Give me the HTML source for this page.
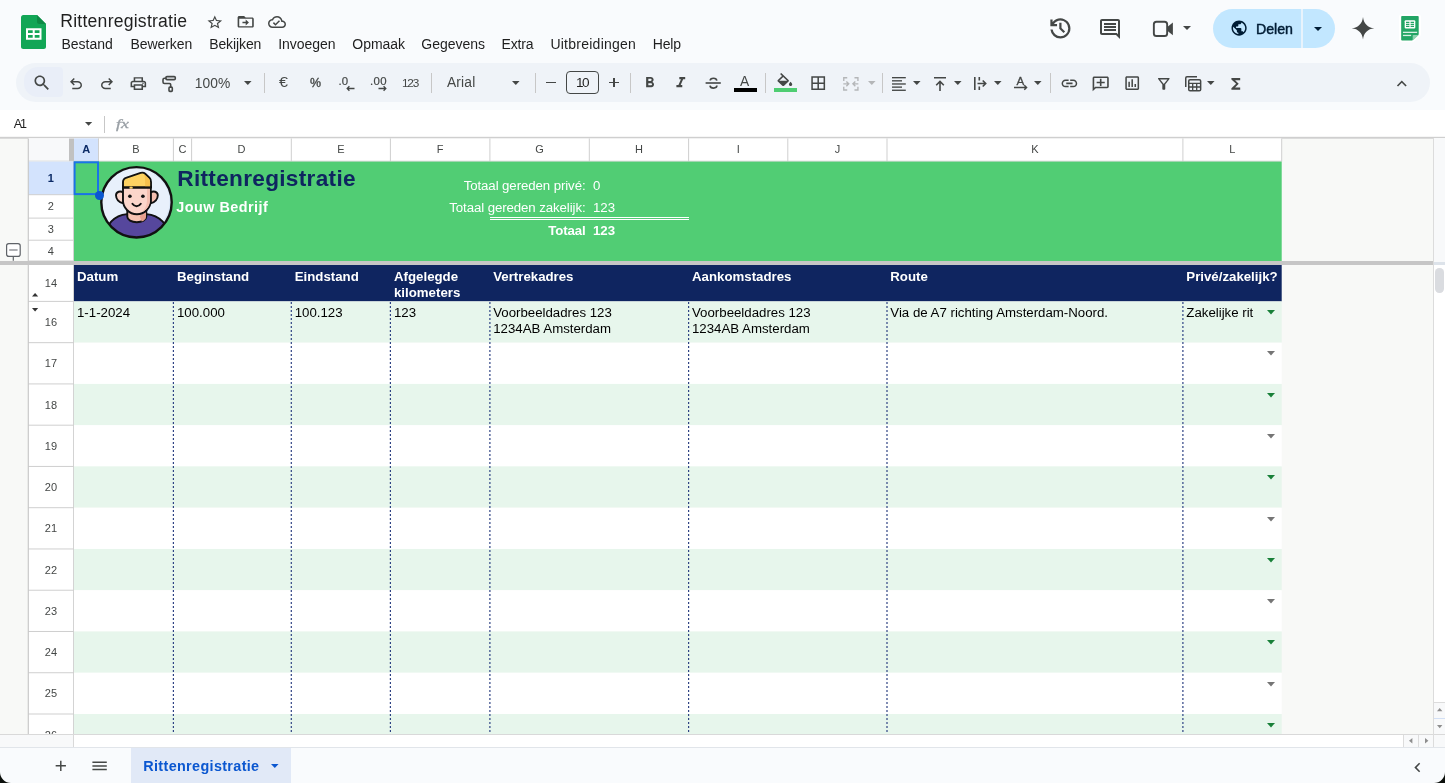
<!DOCTYPE html>
<html>
<head>
<meta charset="utf-8">
<title>Rittenregistratie</title>
<style>
*{box-sizing:border-box;margin:0;padding:0}
html,body{width:1445px;height:783px;overflow:hidden;background:#f9fbfd;font-family:"Liberation Sans",sans-serif;color:#1f1f1f}
#root{will-change:transform;position:relative;width:1445px;height:783px;overflow:hidden;background:#f9fbfd}
.abs{position:absolute}
.t{position:absolute;white-space:nowrap}
svg{position:absolute;overflow:visible}

</style>
</head>
<body>
<div id="root">
<!-- HEADER -->
<svg style="left:21px;top:14.5px" width="25" height="34" viewBox="0 0 25 34">
<path d="M2.3 0H16l9 9v22.7c0 1.3-1 2.3-2.3 2.3H2.3C1 34 0 33 0 31.700V2.300C0 1 1 0 2.300 0z" fill="#12a656"/>
<path d="M16 0l9 9h-6.700C17 9 16 8 16 6.700z" fill="#0d8a45"/>
<path d="M5 13.300h15.500v11.500H5zM7 15.300v2.700h4.700v-2.700zM13.700 15.300v2.700h4.800v-2.700zM7 20v2.800h4.700V20zM13.700 20v2.800h4.800V20z" fill="#fff" fill-rule="evenodd"/>
</svg>
<div class="t" style="left:60.30px;top:13px;font-size:17.60px;line-height:17.60px;color:#1f1f1f;letter-spacing:0.228px;">Rittenregistratie</div>
<div class="t" style="left:61.40px;top:37px;font-size:14.00px;line-height:14.00px;color:#1f1f1f;">Bestand</div>
<div class="t" style="left:130.40px;top:37px;font-size:14.00px;line-height:14.00px;color:#1f1f1f;letter-spacing:-0.065px;">Bewerken</div>
<div class="t" style="left:209.20px;top:37px;font-size:14.00px;line-height:14.00px;color:#1f1f1f;letter-spacing:-0.102px;">Bekijken</div>
<div class="t" style="left:278.20px;top:37px;font-size:14.00px;line-height:14.00px;color:#1f1f1f;letter-spacing:-0.030px;">Invoegen</div>
<div class="t" style="left:352.30px;top:37px;font-size:14.00px;line-height:14.00px;color:#1f1f1f;letter-spacing:-0.042px;">Opmaak</div>
<div class="t" style="left:421.30px;top:37px;font-size:14.00px;line-height:14.00px;color:#1f1f1f;letter-spacing:-0.017px;">Gegevens</div>
<div class="t" style="left:501.60px;top:37px;font-size:14.00px;line-height:14.00px;color:#1f1f1f;letter-spacing:-0.194px;">Extra</div>
<div class="t" style="left:550.40px;top:37px;font-size:14.00px;line-height:14.00px;color:#1f1f1f;letter-spacing:0.250px;">Uitbreidingen</div>
<div class="t" style="left:652.70px;top:37px;font-size:14.00px;line-height:14.00px;color:#1f1f1f;letter-spacing:-0.164px;">Help</div>
<svg style="left:205.53px;top:13.92px" width="17.60" height="16.60" viewBox="0 0 24 24" fill="#444746" preserveAspectRatio="none" ><path d="M22 9.24l-7.19-.62L12 2 9.19 8.63 2 9.24l5.460 4.730L5.820 21 12 17.270 18.180 21l-1.630-7.030L22 9.240zM12 15.400l-3.760 2.270 1-4.280-3.320-2.880 4.380-.380L12 6.100l1.710 4.040 4.380.380-3.320 2.880 1 4.280L12 15.400z"/></svg>
<svg style="left:235.98px;top:13.28px" width="19.40" height="17.50" viewBox="0 0 24 24" fill="#444746" preserveAspectRatio="none" ><path d="M20 6h-8l-2-2H4c-1.100 0-2 .900-2 2v12c0 1.100.900 2 2 2h16c1.100 0 2-.900 2-2V8c0-1.100-.900-2-2-2zm0 12H4V8h16v10zm-8-1l4-4-4-4v3H8v2h4v3z"/></svg>
<svg style="left:268.20px;top:13.20px" width="18.00" height="18.00" viewBox="0 0 24 24" fill="#444746" ><path d="M19.350 10.040C18.670 6.590 15.640 4 12 4 9.110 4 6.600 5.640 5.350 8.040 2.340 8.360 0 10.910 0 14c0 3.310 2.690 6 6 6h13c2.760 0 5-2.240 5-5 0-2.640-2.050-4.780-4.650-4.960zM19 18H6c-2.210 0-4-1.790-4-4 0-2.050 1.530-3.760 3.560-3.970l1.070-.110.500-.950C8.080 7.140 9.940 6 12 6c2.620 0 4.880 1.860 5.390 4.430l.300 1.500 1.530.110c1.560.100 2.780 1.410 2.780 2.960 0 1.650-1.350 3-3 3zm-9-3.820l-2.090-2.090L6.500 13.500 10 17l6.010-6.010-1.410-1.410z"/></svg>
<svg style="left:1047.35px;top:14.75px" width="26.80" height="26.80" viewBox="0 -960 960 960" fill="#444746" ><path d="M480-120q-138 0-240.500-91.500T122-440h82q14 104 92.500 172T480-200q117 0 198.500-81.500T760-480q0-117-81.500-198.500T480-760q-69 0-129 32t-101 88h110v80H120v-240h80v94q51-64 124.500-99T480-840q75 0 140.500 28.500t114 77q48.500 48.500 77 114T840-480q0 75-28.500 140.500t-77 114q-48.500 48.500-114 77T480-120Zm112-192L440-464v-216h80v184l128 128-56 56Z"/></svg>
<svg style="left:1097.50px;top:16.80px" width="24.00" height="24.00" viewBox="0 0 24 24" fill="#444746" ><path d="M21.990 4c0-1.100-.890-2-1.990-2H4c-1.100 0-2 .900-2 2v12c0 1.100.900 2 2 2h14l4 4-.010-18zM20 4v13.170L18.830 16H4V4h16zM6 12h12v2H6zm0-3h12v2H6zm0-3h12v2H6z"/></svg>
<svg style="left:1150px;top:18px" width="26" height="22" viewBox="0 0 26 22"><rect x="3.850" y="3.700" width="13.300" height="14.300" rx="2.600" fill="none" stroke="#444746" stroke-width="1.900"/><path d="M17.300 8.900l5.600-4.500v12.900l-5.600-4.500z" fill="#444746"/></svg>
<svg style="left:1182.50px;top:26.30px" width="8.00" height="4.00" viewBox="0 0 8.00 4.00" fill="#444746"><polygon points="0,0 8.00,0 4.00,4.00"/></svg>
<div class="abs" style="left:1213.00px;top:8.50px;width:122.00px;height:39.50px;background:#c2e7ff;border-radius:20px;"></div>
<div class="abs" style="left:1301.00px;top:8.50px;width:1.50px;height:39.50px;background:#e8f3fc;"></div>
<svg style="left:1230.10px;top:19.20px" width="18.20" height="18.20" viewBox="0 0 24 24" fill="#001d35" ><path d="M12 2C6.480 2 2 6.480 2 12s4.480 10 10 10 10-4.480 10-10S17.520 2 12 2zm-1 17.930c-3.950-.490-7-3.850-7-7.930 0-.620.080-1.210.210-1.790L9 15v1c0 1.100.900 2 2 2v1.930zm6.900-2.540c-.260-.810-1-1.390-1.900-1.390h-1v-3c0-.550-.450-1-1-1H8v-2h2c.550 0 1-.450 1-1V7h2c1.100 0 2-.900 2-2v-.410c2.930 1.190 5 4.060 5 7.410 0 2.080-.800 3.970-2.100 5.390z"/></svg>
<div class="t" style="left:1256.00px;top:22px;font-size:14.20px;line-height:14.20px;color:#001d35;letter-spacing:-0.025px;-webkit-text-stroke:0.45px #001d35;">Delen</div>
<svg style="left:1314.00px;top:26.80px" width="8.00" height="4.00" viewBox="0 0 8.00 4.00" fill="#001d35"><polygon points="0,0 8.00,0 4.00,4.00"/></svg>
<svg style="left:1350.5px;top:17.100px" width="24" height="22.600" viewBox="0 0 24 24" fill="#444746"><path d="M12 0C12.700 7 17 11.300 24 12 17 12.700 12.700 17 12 24 11.300 17 7 12.700 0 12 7 11.300 11.300 7 12 0z"/></svg>
<svg style="left:1398.6px;top:14.700px" width="21.900" height="27.300" viewBox="0 0 20 27.300" preserveAspectRatio="none">
<path d="M2.800 0h14.400a1.800 1.800 0 0 1 1.800 1.800v18l-6.500 6.500H2.800A1.800 1.800 0 0 1 1 24.500V1.800A1.800 1.800 0 0 1 2.800 0z" fill="#fff" stroke="#fff" stroke-width="2"/>
<path d="M2.800 1h14.400a.8.800 0 0 1 .8.800v17.700l-6 6H2.800a.8.800 0 0 1-.8-.8V1.800a.8.800 0 0 1 .8-.8z" fill="#22a565"/>
<path d="M12.500 25.500l5.500-5.500h-4.700a.8.800 0 0 0-.8.800z" fill="#8fd3b0"/>
<rect x="5.200" y="5.200" width="9.700" height="8.300" rx="1" fill="#fff"/>
<path d="M6.400 6.800h3.100v1.100H6.400zM10.600 6.800h3.100v1.100h-3.100zM6.400 8.800h3.100v1.100H6.400zM10.600 8.800h3.100v1.100h-3.100zM6.400 10.800h3.100v1.100H6.400zM10.600 10.800h3.100v1.100h-3.100z" fill="#22a565"/>
<rect x="3.600" y="16.700" width="13" height="1.300" fill="#d8f0e3"/>
<rect x="3.600" y="19.800" width="7.500" height="1.300" fill="#d8f0e3"/>
</svg>
<!-- TOOLBAR -->
<div class="abs" style="left:16.00px;top:63.00px;width:1413.50px;height:38.70px;background:#eff3f8;border-radius:19.500px;"></div>
<div class="abs" style="left:24.00px;top:66.70px;width:39.00px;height:30.70px;background:#e9eef8;border-radius:14px 4px 4px 14px;"></div>
<svg style="left:32.40px;top:72.90px" width="19.80" height="19.80" viewBox="0 0 24 24" fill="#444746" ><path d="M15.500 14h-.790l-.280-.270C15.410 12.590 16 11.110 16 9.500 16 5.910 13.090 3 9.500 3S3 5.910 3 9.500 5.910 16 9.500 16c1.610 0 3.090-.590 4.230-1.570l.270.280v.790l5 4.990L20.490 19l-4.990-5zm-6 0C7.010 14 5 11.990 5 9.500S7.010 5 9.500 5 14 7.010 14 9.500 11.990 14 9.500 14z"/></svg>
<svg style="left:67.00px;top:75.30px" width="18.00" height="18.00" viewBox="0 -960 960 960" fill="#444746" ><path d="M280-200v-80h284q63 0 109.500-40T720-420q0-60-46.500-100T564-560H312l104 104-56 56-200-200 200-200 56 56-104 104h252q97 0 166.500 63T800-420q0 94-69.500 157T564-200H280Z"/></svg>
<svg style="left:98.00px;top:75.30px" width="18.00" height="18.00" viewBox="0 -960 960 960" fill="#444746" ><path d="M396-200q-97 0-166.500-63T160-420q0-94 69.500-157T396-640h252L544-744l56-56 200 200-200 200-56-56 104-104H396q-63 0-109.500 40T240-420q0 60 46.500 100T396-280h284v80H396Z"/></svg>
<svg style="left:129.24px;top:74.95px" width="18.70" height="17.20" viewBox="0 0 24 24" fill="#444746" preserveAspectRatio="none" ><path d="M19 8h-1V3H6v5H5c-1.660 0-3 1.340-3 3v6h4v4h12v-4h4v-6c0-1.660-1.340-3-3-3zM8 5h8v3H8V5zm8 14H8v-4h8v4zm2-4v-2H6v2H4v-4c0-.550.450-1 1-1h14c.550 0 1 .450 1 1v4h-2z"/><circle cx="18" cy="11.500" r="1"/></svg>
<svg style="left:160px;top:74px" width="20" height="20" viewBox="0 0 20 20" fill="none" stroke="#444746" stroke-width="1.600" stroke-linejoin="round" stroke-linecap="round"><rect x="5.900" y="2.600" width="9.400" height="3" rx="1.100"/><path d="M5.900 4.200H4.500Q3 4.200 3 5.700V8Q3 9.500 4.500 9.500H9.500Q10.700 9.500 10.700 10.700V12.800"/><rect x="9" y="13.100" width="3.300" height="4.300" rx=".9"/></svg>
<div class="t" style="left:194.80px;top:77px;font-size:13.80px;line-height:13.80px;color:#444746;letter-spacing:0.035px;">100%</div>
<svg style="left:243.90px;top:81.25px" width="7.60" height="3.90" viewBox="0 0 7.60 3.90" fill="#444746"><polygon points="0,0 7.60,0 3.80,3.90"/></svg>
<div class="abs" style="left:264.40px;top:73.00px;width:1.00px;height:19.50px;background:#c7c7c7;"></div>
<div class="t" style="left:279.30px;top:75px;font-size:14.20px;line-height:14.20px;color:#444746;transform:scaleX(1.14);transform-origin:0 0;">€</div>
<div class="t" style="left:310.00px;top:77px;font-size:12.40px;line-height:12.40px;color:#444746;-webkit-text-stroke:0.35px #444746;">%</div>
<div class="t" style="left:338.60px;top:76px;font-size:11.40px;line-height:11.40px;color:#444746;letter-spacing:0.093px;-webkit-text-stroke:0.20px #444746;">.0</div>
<svg style="left:346.400px;top:84.800px" width="9" height="7" viewBox="0 0 9 7" fill="none" stroke="#444746" stroke-width="1.300"><path d="M8.500 3.500H1.200M3.400 1.300L1.200 3.500l2.200 2.200"/></svg>
<div class="t" style="left:370.10px;top:76px;font-size:11.40px;line-height:11.40px;color:#444746;letter-spacing:0.326px;-webkit-text-stroke:0.20px #444746;">.00</div>
<svg style="left:377.600px;top:84.800px" width="9" height="7" viewBox="0 0 9 7" fill="none" stroke="#444746" stroke-width="1.300"><path d="M0.500 3.500H7.800M5.600 1.300L7.800 3.500 5.600 5.700"/></svg>
<div class="t" style="left:402.00px;top:78px;font-size:11.80px;line-height:11.80px;color:#444746;letter-spacing:-1.194px;">123</div>
<div class="abs" style="left:430.50px;top:73.00px;width:1.00px;height:19.50px;background:#c7c7c7;"></div>
<div class="t" style="left:447.00px;top:76px;font-size:13.80px;line-height:13.80px;color:#444746;letter-spacing:0.148px;">Arial</div>
<svg style="left:512.20px;top:80.75px" width="7.60" height="3.90" viewBox="0 0 7.60 3.90" fill="#444746"><polygon points="0,0 7.60,0 3.80,3.90"/></svg>
<div class="abs" style="left:534.90px;top:73.00px;width:1.00px;height:19.50px;background:#c7c7c7;"></div>
<div class="abs" style="left:545.80px;top:81.80px;width:10.60px;height:1.50px;background:#444746;"></div>
<div class="abs" style="left:566.20px;top:71.20px;width:33.20px;height:23.00px;background:transparent;border:1px solid #444746;border-radius:4px;"></div>
<div class="t" style="left:576.00px;top:76px;font-size:13.60px;line-height:13.60px;color:#1f1f1f;letter-spacing:-1.627px;">10</div>
<div class="abs" style="left:609.30px;top:81.80px;width:9.60px;height:1.50px;background:#444746;"></div>
<div class="abs" style="left:613.35px;top:77.70px;width:1.50px;height:9.60px;background:#444746;"></div>
<div class="abs" style="left:630.10px;top:73.00px;width:1.00px;height:19.50px;background:#c7c7c7;"></div>
<svg style="left:640.50px;top:73.90px" width="17.60" height="17.60" viewBox="0 0 24 24" fill="#444746" ><path d="M15.600 10.790c.970-.670 1.650-1.770 1.650-2.790 0-2.260-1.750-4-4-4H7v14h7.040c2.090 0 3.710-1.700 3.710-3.790 0-1.520-.860-2.820-2.150-3.420zM10 6.500h3c.830 0 1.500.670 1.500 1.500s-.670 1.500-1.500 1.500h-3v-3zm3.500 9H10v-3h3.500c.830 0 1.500.670 1.500 1.500s-.670 1.500-1.500 1.500z"/></svg>
<svg style="left:672.00px;top:73.90px" width="17.60" height="17.60" viewBox="0 0 24 24" fill="#444746" ><path d="M10 4v3h2.210l-3.420 8H6v3h8v-3h-2.210l3.420-8H18V4z"/></svg>
<svg style="left:704.500px;top:74px" width="17" height="18" viewBox="0 0 17 18" fill="none" stroke="#444746" stroke-width="1.600"><path d="M0.600 9H15.800"/><path d="M11.800 6.600C11.600 5 10.300 4.200 8.500 4.200 6.500 4.200 5.200 5.200 5.200 6.600"/><path d="M5 11.600c.2 1.600 1.500 2.500 3.500 2.500s3.400-.9 3.400-2.500"/></svg>
<div class="t" style="left:740.10px;top:75px;font-size:13.80px;line-height:13.80px;color:#444746;">A</div>
<div class="abs" style="left:733.50px;top:88.30px;width:23.20px;height:4.00px;background:#000;"></div>
<div class="abs" style="left:764.80px;top:73.00px;width:1.00px;height:19.50px;background:#c7c7c7;"></div>
<svg style="left:774.74px;top:72.60px" width="19.70" height="18.50" viewBox="0 0 24 24" fill="#444746" preserveAspectRatio="none" ><path d="M16.560 8.940L7.620 0 6.210 1.410l2.380 2.380-5.150 5.150c-.590.590-.590 1.540 0 2.120l5.500 5.500c.290.290.680.440 1.060.440s.770-.150 1.060-.440l5.500-5.500c.590-.580.590-1.530 0-2.120zM5.210 10L10 5.210 14.790 10H5.210zM19 11.500s-2 2.170-2 3.500c0 1.100.900 2 2 2s2-.900 2-2c0-1.330-2-3.500-2-3.500z"/></svg>
<div class="abs" style="left:774.00px;top:88.30px;width:23.20px;height:4.00px;background:#4fcd72;"></div>
<svg style="left:809.10px;top:74.20px" width="18.40" height="18.40" viewBox="0 0 24 24" fill="#444746" ><path d="M3 3v18h18V3H3zm8 16H5v-6h6v6zm0-8H5V5h6v6zm8 8h-6v-6h6v6zm0-8h-6V5h6v6z"/></svg>
<svg style="left:843.200px;top:76.600px" width="15.700" height="13.700" viewBox="0 0 16 14" fill="none" stroke="#b4b6b8" stroke-width="1.400"><path d="M0.750 4V0.750H4.300M11.700 0.750h3.550V4M0.750 10v3.250H4.300M11.700 13.250h3.550V10M0.300 7h5.500M3.400 4.500L5.900 7 3.400 9.500M15.700 7H10.200M12.600 4.500L10.100 7l2.500 2.500"/></svg>
<svg style="left:868.00px;top:81.25px" width="7.60" height="3.90" viewBox="0 0 7.60 3.90" fill="#b4b6b8"><polygon points="0,0 7.60,0 3.80,3.90"/></svg>
<div class="abs" style="left:882.00px;top:73.00px;width:1.00px;height:19.50px;background:#c7c7c7;"></div>
<svg style="left:892.400px;top:76.700px" width="13.800" height="14" viewBox="0 0 13.800 14" fill="#444746"><rect x="0" y="0" width="13.800" height="1.350"/><rect x="0" y="3.150" width="10" height="1.350"/><rect x="0" y="6.300" width="13.800" height="1.350"/><rect x="0" y="9.450" width="10" height="1.350"/><rect x="0" y="12.600" width="13.800" height="1.350"/></svg>
<svg style="left:913.20px;top:81.25px" width="7.60" height="3.90" viewBox="0 0 7.60 3.90" fill="#444746"><polygon points="0,0 7.60,0 3.80,3.90"/></svg>
<svg style="left:933.700px;top:76.600px" width="12" height="14" viewBox="0 0 12 14" fill="none" stroke="#444746" stroke-width="1.600"><path d="M0 0.800h12M6 14V4.500M2.200 8.300l3.800-3.800 3.800 3.800"/></svg>
<svg style="left:953.70px;top:81.25px" width="7.60" height="3.90" viewBox="0 0 7.60 3.90" fill="#444746"><polygon points="0,0 7.60,0 3.80,3.90"/></svg>
<svg style="left:973.800px;top:77px" width="13" height="13" viewBox="0 0 13 13" fill="none" stroke="#444746" stroke-width="1.600"><path d="M0.800 0v13M5.300 0v3.500M5.300 9.500V13M3.500 6.500h8M8.700 3.500l3 3-3 3"/></svg>
<svg style="left:994.00px;top:81.25px" width="7.60" height="3.90" viewBox="0 0 7.60 3.90" fill="#444746"><polygon points="0,0 7.60,0 3.80,3.90"/></svg>
<div class="t" style="left:1016.40px;top:75px;font-size:11.60px;line-height:11.60px;color:#444746;-webkit-text-stroke:0.30px #444746;">A</div>
<svg style="left:1014px;top:85.200px" width="14" height="5" viewBox="0 0 14 5" fill="none" stroke="#444746" stroke-width="1.400"><path d="M0 2.500h12.500M10.300 0.200l2.300 2.300-2.300 2.300"/></svg>
<svg style="left:1034.10px;top:81.25px" width="7.60" height="3.90" viewBox="0 0 7.60 3.90" fill="#444746"><polygon points="0,0 7.60,0 3.80,3.90"/></svg>
<div class="abs" style="left:1050.00px;top:73.00px;width:1.00px;height:19.50px;background:#c7c7c7;"></div>
<svg style="left:1060.10px;top:74.00px" width="18.80" height="18.80" viewBox="0 0 24 24" fill="#444746" ><path d="M3.900 12c0-1.710 1.390-3.100 3.100-3.100h4V7H7c-2.760 0-5 2.240-5 5s2.240 5 5 5h4v-1.900H7c-1.710 0-3.100-1.390-3.100-3.100zM8 13h8v-2H8v2zm9-6h-4v1.900h4c1.710 0 3.100 1.390 3.100 3.100s-1.390 3.100-3.100 3.100h-4V17h4c2.760 0 5-2.240 5-5s-2.240-5-5-5z"/></svg>
<svg style="left:1091.200px;top:74.700px" width="19.400" height="17.800" viewBox="0 0 24 24" preserveAspectRatio="none" fill="#444746"><g transform="translate(24,0) scale(-1,1)"><path d="M22 4c0-1.100-.900-2-2-2H4c-1.100 0-2 .900-2 2v12c0 1.100.900 2 2 2h14l4 4V4zm-2 13.170L18.830 16H4V4h16v13.170zM13 5h-2v4H7v2h4v4h2v-4h4V9h-4z"/></g></svg>
<svg style="left:1123.20px;top:74.20px" width="18.40" height="18.40" viewBox="0 0 24 24" fill="#444746" ><path d="M9 17H7v-7h2v7zm4 0h-2V7h2v10zm4 0h-2v-4h2v4zm2 2H5V5h14v14zm0-16H5c-1.100 0-2 .900-2 2v14c0 1.100.900 2 2 2h14c1.100 0 2-.900 2-2V5c0-1.100-.900-2-2-2z"/></svg>
<svg style="left:1155.00px;top:75.10px" width="17.60" height="17.60" viewBox="0 0 24 24" fill="#444746" ><path d="M7 6h10l-5.010 6.300L7 6zm-2.750-.390C6.270 8.200 10 13 10 13v6c0 .550.450 1 1 1h2c.550 0 1-.450 1-1v-6s3.720-4.800 5.740-7.390c.510-.660.040-1.610-.790-1.610H5.040c-.830 0-1.300.950-.790 1.610z"/></svg>
<svg style="left:1184.800px;top:75.600px" width="16.400" height="15.600" viewBox="0 0 16.400 15.600" fill="none" stroke="#444746" stroke-width="1.500"><path d="M0.750 11V2A1.300 1.300 0 0 1 2 0.750H12"/><rect x="3.750" y="3.750" width="11.900" height="11.100" rx="1.300"/><path d="M3.750 7.300h11.900M3.750 11h11.900M7.700 7.300v7.500M11.700 7.300v7.500" stroke-width="1.300"/></svg>
<svg style="left:1207.30px;top:81.25px" width="7.60" height="3.90" viewBox="0 0 7.60 3.90" fill="#444746"><polygon points="0,0 7.60,0 3.80,3.90"/></svg>
<svg style="left:1227.30px;top:74.60px" width="17.60" height="17.60" viewBox="0 0 24 24" fill="#444746" ><path d="M18 4H6v2l6.500 6L6 18v2h12v-3h-7l5-5-5-5h7z"/></svg>
<svg style="left:1392.20px;top:74.10px" width="19.60" height="19.60" viewBox="0 0 24 24" fill="#444746" ><path d="M12 8l-6 6 1.410 1.410L12 10.830l4.590 4.580L18 14z"/></svg>
<!-- FORMULA -->
<div class="abs" style="left:0.00px;top:110.00px;width:1445.00px;height:27.60px;background:#fff;"></div>
<div class="t" style="left:13.80px;top:118px;font-size:12.60px;line-height:12.60px;color:#1f1f1f;letter-spacing:-2.212px;">A1</div>
<svg style="left:84.70px;top:121.75px" width="7.20" height="3.70" viewBox="0 0 7.20 3.70" fill="#444746"><polygon points="0,0 7.20,0 3.60,3.70"/></svg>
<div class="abs" style="left:104.00px;top:116.00px;width:1.00px;height:16.50px;background:#c7c7c7;"></div>
<div class="t" style="left:116px;top:116px;font-family:'Liberation Serif',serif;font-style:italic;font-size:13.200px;line-height:16px;color:#9aa0a6;-webkit-text-stroke:0.3px #9aa0a6;transform:scaleX(1.36);transform-origin:0 0">fx</div>
<!-- GRID -->
<svg style="left:0;top:0" width="1445" height="783" viewBox="0 0 1445 783"><rect x="0.00" y="137.20" width="1445.00" height="610.00" fill="#f8f9f7" /><rect x="0.00" y="136.80" width="1445.00" height="1.90" fill="#cfcfcf" /><rect x="28.00" y="138.40" width="1253.70" height="23.00" fill="#fff" /><rect x="28.00" y="138.40" width="41.00" height="22.60" fill="#f8f9fa" /><rect x="69.00" y="138.60" width="5.00" height="23.00" fill="#c1c1c1" /><rect x="74.00" y="138.40" width="24.50" height="22.60" fill="#d3e3fd" /><rect x="98.00" y="138.40" width="1.00" height="23.00" fill="#cfcfcf" /><rect x="172.90" y="138.40" width="1.00" height="23.00" fill="#cfcfcf" /><rect x="191.10" y="138.40" width="1.00" height="23.00" fill="#cfcfcf" /><rect x="290.80" y="138.40" width="1.00" height="23.00" fill="#cfcfcf" /><rect x="389.90" y="138.40" width="1.00" height="23.00" fill="#cfcfcf" /><rect x="489.40" y="138.40" width="1.00" height="23.00" fill="#cfcfcf" /><rect x="588.80" y="138.40" width="1.00" height="23.00" fill="#cfcfcf" /><rect x="688.10" y="138.40" width="1.00" height="23.00" fill="#cfcfcf" /><rect x="787.30" y="138.40" width="1.00" height="23.00" fill="#cfcfcf" /><rect x="886.50" y="138.40" width="1.00" height="23.00" fill="#cfcfcf" /><rect x="1182.40" y="138.40" width="1.00" height="23.00" fill="#cfcfcf" /><rect x="1281.20" y="138.40" width="1.00" height="23.00" fill="#cfcfcf" /><rect x="28.00" y="160.70" width="1253.70" height="1.00" fill="#cfcfcf" /><rect x="28.00" y="161.60" width="45.60" height="572.80" fill="#fff" /><rect x="28.00" y="161.60" width="45.60" height="33.10" fill="#d3e3fd" /><rect x="28.00" y="194.20" width="46.00" height="1.00" fill="#cfcfcf" /><rect x="28.00" y="217.60" width="46.00" height="1.00" fill="#cfcfcf" /><rect x="28.00" y="239.70" width="46.00" height="1.00" fill="#cfcfcf" /><rect x="28.00" y="260.50" width="46.00" height="1.00" fill="#cfcfcf" /><rect x="28.00" y="300.90" width="46.00" height="1.00" fill="#cfcfcf" /><rect x="28.00" y="342.16" width="46.00" height="1.00" fill="#cfcfcf" /><rect x="28.00" y="383.42" width="46.00" height="1.00" fill="#cfcfcf" /><rect x="28.00" y="424.68" width="46.00" height="1.00" fill="#cfcfcf" /><rect x="28.00" y="465.94" width="46.00" height="1.00" fill="#cfcfcf" /><rect x="28.00" y="507.20" width="46.00" height="1.00" fill="#cfcfcf" /><rect x="28.00" y="548.46" width="46.00" height="1.00" fill="#cfcfcf" /><rect x="28.00" y="589.72" width="46.00" height="1.00" fill="#cfcfcf" /><rect x="28.00" y="630.98" width="46.00" height="1.00" fill="#cfcfcf" /><rect x="28.00" y="672.24" width="46.00" height="1.00" fill="#cfcfcf" /><rect x="28.00" y="713.50" width="46.00" height="1.00" fill="#cfcfcf" /><rect x="27.70" y="138.40" width="1.20" height="596.00" fill="#c9c9c9" /><rect x="73.10" y="161.60" width="0.90" height="572.80" fill="#cfcfcf" /><rect x="74.00" y="161.60" width="1207.70" height="99.60" fill="#51cd74" /><rect x="74.00" y="265.00" width="1207.70" height="36.40" fill="#0f2560" /><rect x="74.00" y="301.40" width="1207.70" height="41.31" fill="#e7f6ec" /><rect x="74.00" y="342.66" width="1207.70" height="41.31" fill="#fff" /><rect x="74.00" y="383.92" width="1207.70" height="41.31" fill="#e7f6ec" /><rect x="74.00" y="425.18" width="1207.70" height="41.31" fill="#fff" /><rect x="74.00" y="466.44" width="1207.70" height="41.31" fill="#e7f6ec" /><rect x="74.00" y="507.70" width="1207.70" height="41.31" fill="#fff" /><rect x="74.00" y="548.96" width="1207.70" height="41.31" fill="#e7f6ec" /><rect x="74.00" y="590.22" width="1207.70" height="41.31" fill="#fff" /><rect x="74.00" y="631.48" width="1207.70" height="41.31" fill="#e7f6ec" /><rect x="74.00" y="672.74" width="1207.70" height="41.31" fill="#fff" /><rect x="74.00" y="714.00" width="1207.70" height="20.45" fill="#e7f6ec" /><rect x="0.00" y="261.00" width="1433.60" height="4.00" fill="#c6c6c6" /><rect x="1433.60" y="261.00" width="11.40" height="4.00" fill="#dde3ea" /><line x1="173.40" y1="302.00" x2="173.40" y2="734.40" stroke="#2f4384" stroke-width="1.2" stroke-dasharray="2 2"/><line x1="291.30" y1="302.00" x2="291.30" y2="734.40" stroke="#2f4384" stroke-width="1.2" stroke-dasharray="2 2"/><line x1="390.40" y1="302.00" x2="390.40" y2="734.40" stroke="#2f4384" stroke-width="1.2" stroke-dasharray="2 2"/><line x1="489.90" y1="302.00" x2="489.90" y2="734.40" stroke="#2f4384" stroke-width="1.2" stroke-dasharray="2 2"/><line x1="688.60" y1="302.00" x2="688.60" y2="734.40" stroke="#2f4384" stroke-width="1.2" stroke-dasharray="2 2"/><line x1="887.00" y1="302.00" x2="887.00" y2="734.40" stroke="#2f4384" stroke-width="1.2" stroke-dasharray="2 2"/><line x1="1182.90" y1="302.00" x2="1182.90" y2="734.40" stroke="#2f4384" stroke-width="1.2" stroke-dasharray="2 2"/></svg>
<div class="t" style="left:82.28px;top:144px;font-size:11.00px;line-height:11.00px;color:#0b2a66;font-weight:bold;">A</div>
<div class="t" style="left:132.28px;top:144px;font-size:11.00px;line-height:11.00px;color:#444746;">B</div>
<div class="t" style="left:178.53px;top:144px;font-size:11.00px;line-height:11.00px;color:#444746;">C</div>
<div class="t" style="left:237.48px;top:144px;font-size:11.00px;line-height:11.00px;color:#444746;">D</div>
<div class="t" style="left:337.18px;top:144px;font-size:11.00px;line-height:11.00px;color:#444746;">E</div>
<div class="t" style="left:436.79px;top:144px;font-size:11.00px;line-height:11.00px;color:#444746;">F</div>
<div class="t" style="left:535.32px;top:144px;font-size:11.00px;line-height:11.00px;color:#444746;">G</div>
<div class="t" style="left:634.98px;top:144px;font-size:11.00px;line-height:11.00px;color:#444746;">H</div>
<div class="t" style="left:736.67px;top:144px;font-size:11.00px;line-height:11.00px;color:#444746;">I</div>
<div class="t" style="left:834.65px;top:144px;font-size:11.00px;line-height:11.00px;color:#444746;">J</div>
<div class="t" style="left:1031.28px;top:144px;font-size:11.00px;line-height:11.00px;color:#444746;">K</div>
<div class="t" style="left:1229.24px;top:144px;font-size:11.00px;line-height:11.00px;color:#444746;">L</div>
<div class="t" style="left:47.84px;top:173px;font-size:11.00px;line-height:11.00px;color:#0b2a66;font-weight:bold;">1</div>
<div class="t" style="left:47.84px;top:201px;font-size:11.00px;line-height:11.00px;color:#444746;">2</div>
<div class="t" style="left:47.84px;top:224px;font-size:11.00px;line-height:11.00px;color:#444746;">3</div>
<div class="t" style="left:47.84px;top:246px;font-size:11.00px;line-height:11.00px;color:#444746;">4</div>
<div class="t" style="left:44.78px;top:278px;font-size:11.00px;line-height:11.00px;color:#444746;">14</div>
<div class="t" style="left:44.78px;top:317px;font-size:11.00px;line-height:11.00px;color:#444746;">16</div>
<div class="t" style="left:44.78px;top:358px;font-size:11.00px;line-height:11.00px;color:#444746;">17</div>
<div class="t" style="left:44.78px;top:400px;font-size:11.00px;line-height:11.00px;color:#444746;">18</div>
<div class="t" style="left:44.78px;top:441px;font-size:11.00px;line-height:11.00px;color:#444746;">19</div>
<div class="t" style="left:44.78px;top:482px;font-size:11.00px;line-height:11.00px;color:#444746;">20</div>
<div class="t" style="left:44.78px;top:523px;font-size:11.00px;line-height:11.00px;color:#444746;">21</div>
<div class="t" style="left:44.78px;top:565px;font-size:11.00px;line-height:11.00px;color:#444746;">22</div>
<div class="t" style="left:44.78px;top:606px;font-size:11.00px;line-height:11.00px;color:#444746;">23</div>
<div class="t" style="left:44.78px;top:647px;font-size:11.00px;line-height:11.00px;color:#444746;">24</div>
<div class="t" style="left:44.78px;top:688px;font-size:11.00px;line-height:11.00px;color:#444746;">25</div>
<div class="t" style="left:44.78px;top:730px;font-size:11.00px;line-height:11.00px;color:#444746;">26</div>
<svg style="left:6.400px;top:243.300px" width="15" height="18" viewBox="0 0 15 18" fill="none" stroke="#5f6368" stroke-width="1.200"><rect x="0.600" y="0.600" width="13.600" height="12.800" rx="2.200" fill="#fff"/><path d="M3.200 7h8.400M7.300 13.400v4.400"/></svg>
<svg style="left:32.40px;top:293.10px" width="6.20" height="3.60" viewBox="0 0 6.20 3.60" fill="#333"><polygon points="0.00,3.60 3.10,0.00 6.20,3.60"/></svg>
<svg style="left:32.40px;top:307.80px" width="6.20" height="3.60" viewBox="0 0 6.20 3.60" fill="#333"><polygon points="0,0 6.20,0 3.10,3.60"/></svg>
<svg style="left:0;top:0" width="200" height="200" viewBox="0 0 200 200"><rect x="74.600" y="162.300" width="23.400" height="31.800" fill="none" stroke="#1a73e8" stroke-width="2"/></svg>
<svg style="left:99px;top:165px" width="75" height="75" viewBox="0 0 75 75">
<defs><clipPath id="cc"><circle cx="37.500" cy="37.300" r="35.300"/></clipPath></defs>
<circle cx="37.500" cy="37.300" r="35.300" fill="#e8f0fb"/>
<g clip-path="url(#cc)">
<path d="M58 6a36 36 0 0 1 6 56l-3.500-2.500a31 31 0 0 0-6-50z" fill="#d9e6f7"/>
<path d="M5 75C7 58 15 50.500 28 49.100L37.800 52l9.700-2.900C61 50.500 69 58 71 75z" fill="#56479d" stroke="#111" stroke-width="1.900" stroke-linejoin="round"/>
<path d="M12 64.500c14 8.500 37 8.500 51 0l4 11H8z" fill="#493b8a"/>
<path d="M28.300 43v8.800c0 3 4.200 5.500 9.500 5.500s9.500-2.500 9.500-5.500V43z" fill="#f7c3b2" stroke="#111" stroke-width="1.900" stroke-linejoin="round"/>
<path d="M40.500 50.800c3-.8 5-2 6.500-4v5.200c0 1.900-1.600 3.600-4.200 4.500z" fill="#e9a08e"/>
<path d="M24.200 27.600c-2.600-2.200-7.200-1-7.200 2.700 0 3.600 2.700 7.200 7.200 8z" fill="#fbd5ca" stroke="#111" stroke-width="1.900" stroke-linejoin="round"/>
<path d="M51.600 27.600c2.600-2.200 7.200-1 7.200 2.700 0 3.600-2.700 7.200-7.200 8z" fill="#f5bfb0" stroke="#111" stroke-width="1.900" stroke-linejoin="round"/>
<path d="M24 21v14.500C24 42.500 30 49.200 37.900 49.200S51.800 42.500 51.800 35.500V21z" fill="#fbd5ca" stroke="#111" stroke-width="1.900" stroke-linejoin="round"/>
<path d="M48 22.500v13c0 5-2 9.300-5.500 11.800 5.200-2 8.400-6.800 8.400-11.800v-13z" fill="#f5bfb0"/>
<path d="M24 22.500V17c0-2.500 1.500-3.700 3.700-4.400L41.600 7.900c1.800-.6 3.300-.4 4.600.8l4.200 4.100c1.200 1.200 1.600 2.400 1.600 4.100v5.600z" fill="#fdd262" stroke="#111" stroke-width="1.900" stroke-linejoin="round"/>
<path d="M45 9.200l4.700 4.300c1 1 1.400 2 1.400 3.500v4.500h-5v-5.500c0-2.400-.3-4.600-1.100-6.800z" fill="#f6c04c"/>
<path d="M24 22.500h6.300M33.800 22.500h18.200" stroke="#111" stroke-width="1.900" stroke-linecap="round"/>
<path d="M30.500 22.700h3.200" stroke="#fdd262" stroke-width="1.500"/>
<circle cx="30.900" cy="31.200" r="1.800" fill="#111"/><circle cx="43.900" cy="31.200" r="1.800" fill="#111"/>
<path d="M33.400 38.800c2.200 3.300 6.200 3.300 8.400 0" fill="none" stroke="#111" stroke-width="1.900" stroke-linecap="round"/>
</g>
<circle cx="37.500" cy="37.300" r="35.200" fill="none" stroke="#111" stroke-width="2.400"/>
</svg>
<div class="abs" style="left:94.600px;top:190.800px;width:9px;height:9px;border-radius:50%;background:#0b57d0"></div>
<div class="t" style="left:177.30px;top:168px;font-size:22.60px;line-height:22.60px;color:#0f2560;font-weight:bold;letter-spacing:0.312px;">Rittenregistratie</div>
<div class="t" style="left:176.30px;top:200px;font-size:14.40px;line-height:14.40px;color:#fff;font-weight:bold;letter-spacing:0.463px;">Jouw Bedrijf</div>
<div class="t" style="left:463.70px;top:179px;font-size:13.25px;line-height:13.25px;color:#fff;letter-spacing:-0.092px;">Totaal gereden privé:</div>
<div class="t" style="left:592.90px;top:179px;font-size:13.25px;line-height:13.25px;color:#fff;">0</div>
<div class="t" style="left:449.30px;top:201px;font-size:13.25px;line-height:13.25px;color:#fff;letter-spacing:-0.094px;">Totaal gereden zakelijk:</div>
<div class="t" style="left:592.90px;top:201px;font-size:13.25px;line-height:13.25px;color:#fff;">123</div>
<div class="abs" style="left:489.60px;top:216.80px;width:199.60px;height:1.00px;background:#fff;"></div>
<div class="abs" style="left:489.60px;top:218.80px;width:199.60px;height:1.00px;background:#fff;"></div>
<div class="t" style="left:548.30px;top:224px;font-size:13.25px;line-height:13.25px;color:#fff;font-weight:bold;letter-spacing:-0.147px;">Totaal</div>
<div class="t" style="left:592.90px;top:224px;font-size:13.25px;line-height:13.25px;color:#fff;font-weight:bold;">123</div>
<div class="t" style="left:77.00px;top:270px;font-size:13.25px;line-height:13.25px;color:#fff;font-weight:bold;">Datum</div>
<div class="t" style="left:177.00px;top:270px;font-size:13.25px;line-height:13.25px;color:#fff;font-weight:bold;">Beginstand</div>
<div class="t" style="left:294.70px;top:270px;font-size:13.25px;line-height:13.25px;color:#fff;font-weight:bold;">Eindstand</div>
<div class="t" style="left:394.00px;top:270px;font-size:13.25px;line-height:13.25px;color:#fff;font-weight:bold;">Afgelegde</div>
<div class="t" style="left:493.20px;top:270px;font-size:13.25px;line-height:13.25px;color:#fff;font-weight:bold;">Vertrekadres</div>
<div class="t" style="left:692.00px;top:270px;font-size:13.25px;line-height:13.25px;color:#fff;font-weight:bold;">Aankomstadres</div>
<div class="t" style="left:890.30px;top:270px;font-size:13.25px;line-height:13.25px;color:#fff;font-weight:bold;">Route</div>
<div class="t" style="left:1186.30px;top:270px;font-size:13.25px;line-height:13.25px;color:#fff;font-weight:bold;">Privé/zakelijk?</div>
<div class="t" style="left:394.00px;top:286px;font-size:13.25px;line-height:13.25px;color:#fff;font-weight:bold;">kilometers</div>
<div class="t" style="left:77.00px;top:306px;font-size:13.25px;line-height:13.25px;color:#000;">1-1-2024</div>
<div class="t" style="left:177.00px;top:306px;font-size:13.25px;line-height:13.25px;color:#000;">100.000</div>
<div class="t" style="left:294.70px;top:306px;font-size:13.25px;line-height:13.25px;color:#000;">100.123</div>
<div class="t" style="left:394.00px;top:306px;font-size:13.25px;line-height:13.25px;color:#000;">123</div>
<div class="t" style="left:493.20px;top:306px;font-size:13.25px;line-height:13.25px;color:#000;">Voorbeeldadres 123</div>
<div class="t" style="left:692.00px;top:306px;font-size:13.25px;line-height:13.25px;color:#000;">Voorbeeldadres 123</div>
<div class="t" style="left:890.30px;top:306px;font-size:13.25px;line-height:13.25px;color:#000;">Via de A7 richting Amsterdam-Noord.</div>
<div class="t" style="left:1186.30px;top:306px;font-size:13.25px;line-height:13.25px;color:#000;">Zakelijke rit</div>
<div class="t" style="left:493.20px;top:322px;font-size:13.25px;line-height:13.25px;color:#000;">1234AB Amsterdam</div>
<div class="t" style="left:692.00px;top:322px;font-size:13.25px;line-height:13.25px;color:#000;">1234AB Amsterdam</div>
<svg style="left:1267.20px;top:310.20px" width="8.00" height="4.40" viewBox="0 0 8.00 4.40" fill="#188038"><polygon points="0,0 8.00,0 4.00,4.40"/></svg>
<svg style="left:1267.20px;top:351.46px" width="8.00" height="4.40" viewBox="0 0 8.00 4.40" fill="#757575"><polygon points="0,0 8.00,0 4.00,4.40"/></svg>
<svg style="left:1267.20px;top:392.72px" width="8.00" height="4.40" viewBox="0 0 8.00 4.40" fill="#188038"><polygon points="0,0 8.00,0 4.00,4.40"/></svg>
<svg style="left:1267.20px;top:433.98px" width="8.00" height="4.40" viewBox="0 0 8.00 4.40" fill="#757575"><polygon points="0,0 8.00,0 4.00,4.40"/></svg>
<svg style="left:1267.20px;top:475.24px" width="8.00" height="4.40" viewBox="0 0 8.00 4.40" fill="#188038"><polygon points="0,0 8.00,0 4.00,4.40"/></svg>
<svg style="left:1267.20px;top:516.50px" width="8.00" height="4.40" viewBox="0 0 8.00 4.40" fill="#757575"><polygon points="0,0 8.00,0 4.00,4.40"/></svg>
<svg style="left:1267.20px;top:557.76px" width="8.00" height="4.40" viewBox="0 0 8.00 4.40" fill="#188038"><polygon points="0,0 8.00,0 4.00,4.40"/></svg>
<svg style="left:1267.20px;top:599.02px" width="8.00" height="4.40" viewBox="0 0 8.00 4.40" fill="#757575"><polygon points="0,0 8.00,0 4.00,4.40"/></svg>
<svg style="left:1267.20px;top:640.28px" width="8.00" height="4.40" viewBox="0 0 8.00 4.40" fill="#188038"><polygon points="0,0 8.00,0 4.00,4.40"/></svg>
<svg style="left:1267.20px;top:681.54px" width="8.00" height="4.40" viewBox="0 0 8.00 4.40" fill="#757575"><polygon points="0,0 8.00,0 4.00,4.40"/></svg>
<svg style="left:1267.20px;top:722.80px" width="8.00" height="4.40" viewBox="0 0 8.00 4.40" fill="#188038"><polygon points="0,0 8.00,0 4.00,4.40"/></svg>
<!-- BOTTOM -->
<div class="abs" style="left:0.00px;top:734.00px;width:1445.00px;height:13.00px;background:#fff;"></div>
<div class="abs" style="left:0.00px;top:734.00px;width:74.00px;height:13.00px;background:#f8f9fa;"></div>
<div class="abs" style="left:0.00px;top:734.00px;width:1445.00px;height:1.00px;background:#d9d9d9;"></div>
<div class="abs" style="left:73.00px;top:734.40px;width:1.00px;height:12.60px;background:#d9d9d9;"></div>
<div class="abs" style="left:1433.50px;top:138.00px;width:11.50px;height:124.00px;background:#f8f9fa;"></div>
<div class="abs" style="left:1433.50px;top:265.00px;width:11.50px;height:469.00px;background:#fff;"></div>
<div class="abs" style="left:1435.30px;top:267.80px;width:8.40px;height:24.80px;background:#dadce0;border-radius:4.200px;"></div>
<div class="abs" style="left:1434.00px;top:702.50px;width:11.00px;height:31.50px;background:#f8f9fa;"></div>
<div class="abs" style="left:1434.00px;top:702.30px;width:11.00px;height:1.00px;background:#dcdcdc;"></div>
<div class="abs" style="left:1434.00px;top:718.00px;width:11.00px;height:1.00px;background:#d3e0f5;"></div>
<svg style="left:1436.90px;top:708.40px" width="5.40" height="3.20" viewBox="0 0 5.40 3.20" fill="#8e8e8e"><polygon points="0.00,3.20 2.70,0.00 5.40,3.20"/></svg>
<svg style="left:1436.90px;top:724.60px" width="5.40" height="3.20" viewBox="0 0 5.40 3.20" fill="#8e8e8e"><polygon points="0,0 5.40,0 2.70,3.20"/></svg>
<div class="abs" style="left:1403.50px;top:735.00px;width:30.00px;height:11.50px;background:#f8f9fa;"></div>
<div class="abs" style="left:1403.20px;top:735.00px;width:1.00px;height:11.50px;background:#dcdcdc;"></div>
<div class="abs" style="left:1418.20px;top:735.00px;width:1.00px;height:11.50px;background:#dcdcdc;"></div>
<svg style="left:1408.600px;top:737.800px" width="3.400" height="5.400" viewBox="0 0 3.400 5.400" fill="#8e8e8e"><polygon points="3.400,0 3.400,5.400 0,2.700"/></svg>
<svg style="left:1425px;top:737.800px" width="3.400" height="5.400" viewBox="0 0 3.400 5.400" fill="#8e8e8e"><polygon points="0,0 0,5.400 3.400,2.700"/></svg>
<div class="abs" style="left:1434.00px;top:735.00px;width:11.00px;height:11.50px;background:#f8f9fa;"></div>
<div class="abs" style="left:1433.00px;top:138.00px;width:1.00px;height:609.00px;background:#dcdcdc;"></div>
<div class="abs" style="left:0.00px;top:746.50px;width:1445.00px;height:1.00px;background:#e1e5ea;"></div>
<div class="abs" style="left:0.00px;top:747.50px;width:1445.00px;height:35.50px;background:#f9fbfd;"></div>
<svg style="left:51.70px;top:757.20px" width="17.60" height="17.60" viewBox="0 0 24 24" fill="#444746" ><path d="M19 13h-6v6h-2v-6H5v-2h6V5h2v6h6v2z"/></svg>
<svg style="left:90.20px;top:756.85px" width="19.20" height="17.80" viewBox="0 0 24 24" fill="#444746" preserveAspectRatio="none" ><path d="M3 18h18v-2H3v2zm0-5h18v-2H3v2zm0-7v2h18V6H3z"/></svg>
<div class="abs" style="left:131.30px;top:747.50px;width:159.40px;height:35.50px;background:#e1e9f7;"></div>
<div class="t" style="left:143.30px;top:759px;font-size:14.40px;line-height:14.40px;color:#0b57d0;font-weight:bold;letter-spacing:0.342px;">Rittenregistratie</div>
<svg style="left:271.30px;top:764.15px" width="7.60" height="3.90" viewBox="0 0 7.60 3.90" fill="#0b57d0"><polygon points="0,0 7.60,0 3.80,3.90"/></svg>
<svg style="left:1408.30px;top:757.80px" width="19.00" height="19.00" viewBox="0 0 24 24" fill="#444746" ><path d="M15.410 7.410L14 6l-6 6 6 6 1.410-1.410L10.830 12z"/></svg>
<svg style="left:0;top:772px" width="11" height="11" viewBox="0 0 11 11"><path d="M0 0v11h11A11 11 0 0 1 0 0z" fill="#0c100c"/></svg>
<svg style="left:1434px;top:772px" width="11" height="11" viewBox="0 0 11 11"><path d="M11 0v11H0A11 11 0 0 0 11 0z" fill="#0c100c"/></svg>
</div>
</body>
</html>
